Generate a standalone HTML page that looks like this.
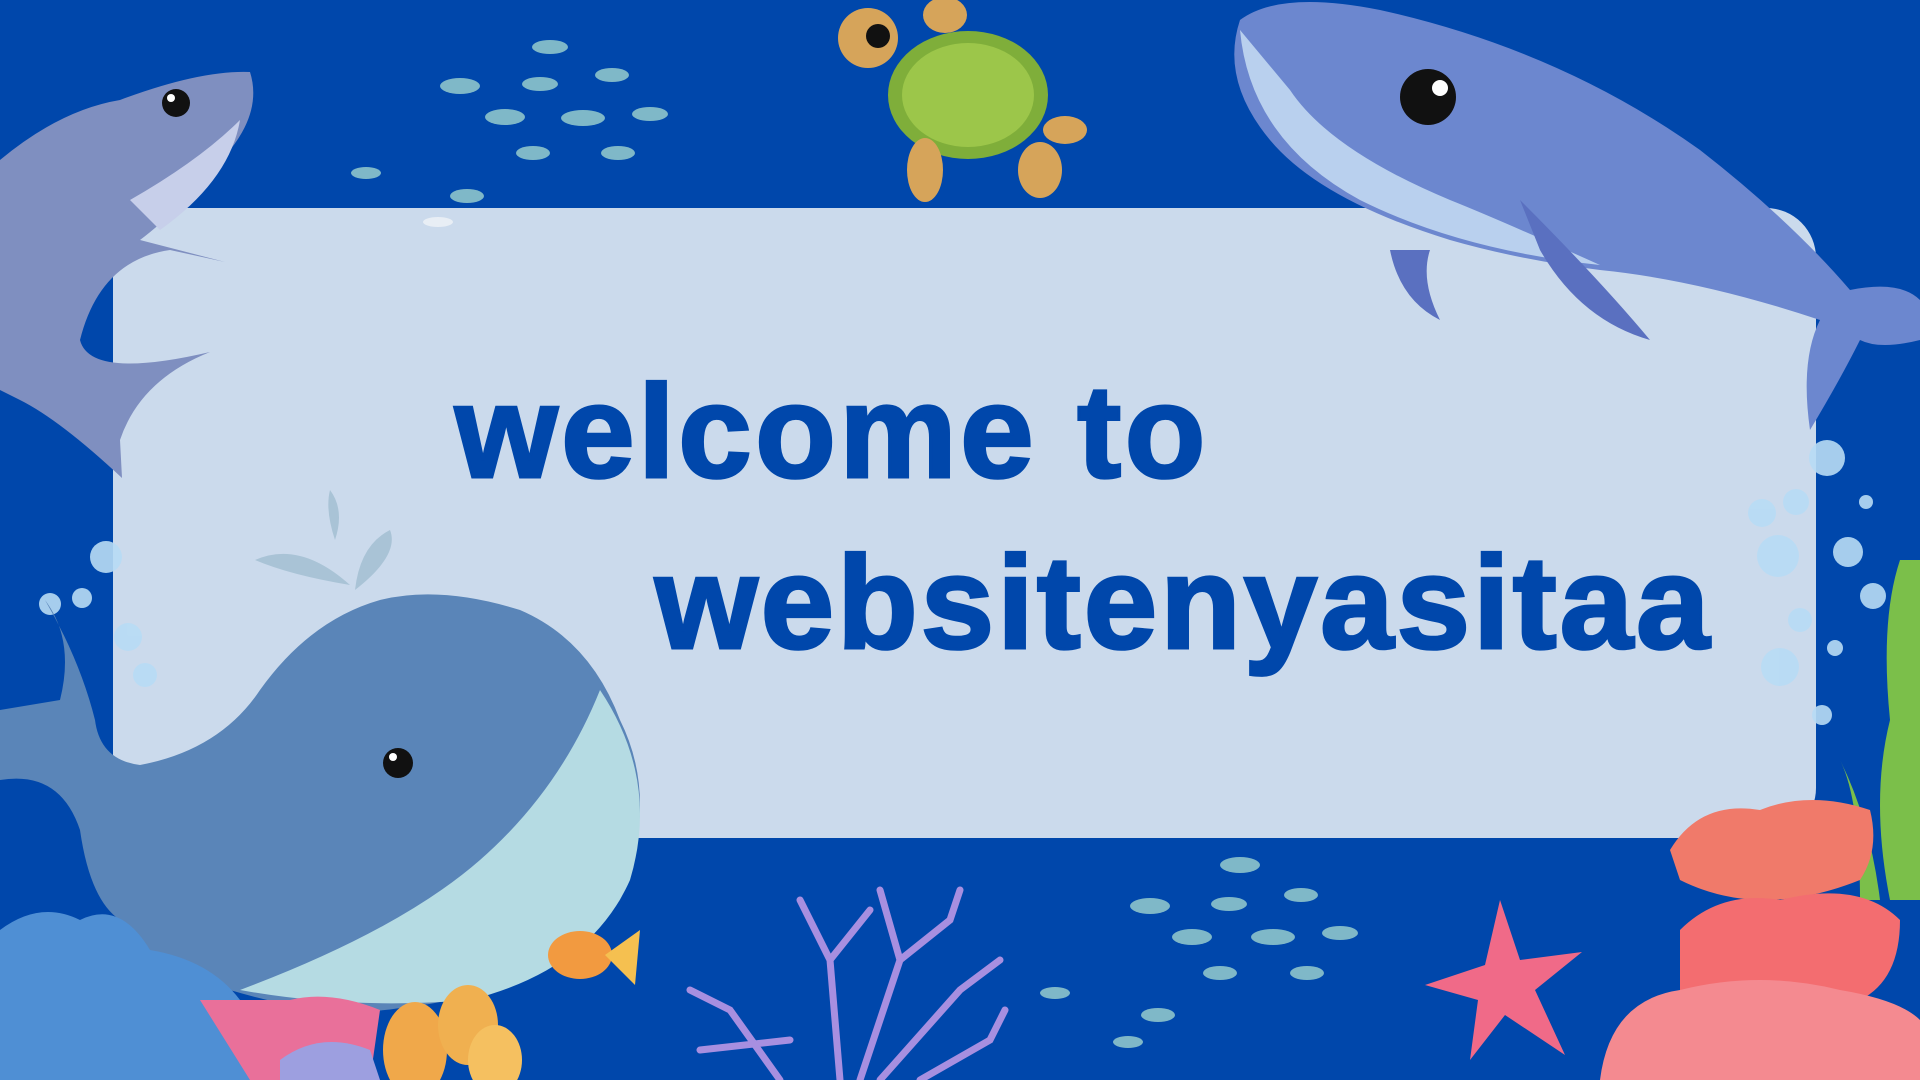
<!DOCTYPE html>
<html><head><meta charset="utf-8"><style>
html,body{margin:0;padding:0;width:1920px;height:1080px;overflow:hidden;background:#0047AB}
.panel{position:absolute;left:113px;top:208px;width:1703px;height:630px;background:#CBDAEC;border-radius:50px}
.t{position:absolute;font-family:"Liberation Sans",sans-serif;font-weight:bold;color:#0047AB;font-size:132px;line-height:1;white-space:nowrap;-webkit-text-stroke:3px #0047AB}
svg{position:absolute;left:0;top:0}
</style></head><body>
<div class="panel"></div>
<div class="t" style="left:455px;top:366px;letter-spacing:3.5px">welcome to</div>
<div class="t" style="left:655px;top:537px;letter-spacing:3px">websitenyasitaa</div>
<svg width="1920" height="1080" viewBox="0 0 1920 1080">
<g fill="#7fb8c8">
<ellipse cx="550" cy="47" rx="18" ry="7"/><ellipse cx="460" cy="86" rx="20" ry="8"/><ellipse cx="540" cy="84" rx="18" ry="7"/><ellipse cx="612" cy="75" rx="17" ry="7"/>
<ellipse cx="505" cy="117" rx="20" ry="8"/><ellipse cx="583" cy="118" rx="22" ry="8"/><ellipse cx="650" cy="114" rx="18" ry="7"/><ellipse cx="533" cy="153" rx="17" ry="7"/><ellipse cx="618" cy="153" rx="17" ry="7"/>
<ellipse cx="366" cy="173" rx="15" ry="6"/><ellipse cx="467" cy="196" rx="17" ry="7"/><ellipse cx="438" cy="222" rx="15" ry="5" fill="#e8eef5"/>
<ellipse cx="1240" cy="865" rx="20" ry="8"/><ellipse cx="1150" cy="906" rx="20" ry="8"/><ellipse cx="1229" cy="904" rx="18" ry="7"/><ellipse cx="1301" cy="895" rx="17" ry="7"/>
<ellipse cx="1192" cy="937" rx="20" ry="8"/><ellipse cx="1273" cy="937" rx="22" ry="8"/><ellipse cx="1340" cy="933" rx="18" ry="7"/><ellipse cx="1220" cy="973" rx="17" ry="7"/><ellipse cx="1307" cy="973" rx="17" ry="7"/>
<ellipse cx="1055" cy="993" rx="15" ry="6"/><ellipse cx="1158" cy="1015" rx="17" ry="7"/><ellipse cx="1128" cy="1042" rx="15" ry="6"/>
</g>
<path d="M0 160 Q60 110 120 100 Q200 70 250 72 Q262 110 230 150 Q180 210 140 240 L225 262 L170 250 Q100 260 80 340 Q90 380 210 352 Q140 380 120 440 L122 478 Q60 420 20 400 L0 390 Z" fill="#7f8fc0"/>
<path d="M130 200 Q200 160 240 120 Q230 180 160 230 Z" fill="#c7cfea"/>
<circle cx="176" cy="103" r="14" fill="#111"/><circle cx="171" cy="98" r="4" fill="#fff"/>
<ellipse cx="968" cy="95" rx="80" ry="64" fill="#7fae3a"/>
<ellipse cx="968" cy="95" rx="66" ry="52" fill="#9cc64a"/>
<circle cx="868" cy="38" r="30" fill="#d6a45a"/><circle cx="878" cy="36" r="12" fill="#111"/>
<ellipse cx="925" cy="170" rx="18" ry="32" fill="#d6a45a"/><ellipse cx="1040" cy="170" rx="22" ry="28" fill="#d6a45a"/><ellipse cx="1065" cy="130" rx="22" ry="14" fill="#d6a45a"/><ellipse cx="945" cy="15" rx="22" ry="18" fill="#d6a45a"/>
<path d="M1240 20 Q1280 -10 1380 10 Q1560 50 1700 150 Q1790 220 1850 290 Q1900 280 1920 300 L1920 340 Q1880 350 1860 340 Q1840 380 1810 430 Q1800 360 1820 320 Q1700 280 1600 270 Q1520 260 1450 240 Q1320 200 1270 140 Q1220 80 1240 20 Z" fill="#6c87cf"/>
<path d="M1240 30 Q1250 140 1360 200 Q1460 250 1600 265 Q1500 220 1450 200 Q1330 150 1290 90 Z" fill="#b9d0ee"/>
<path d="M1520 200 Q1600 280 1650 340 Q1580 320 1540 250 Z" fill="#5a70c0"/>
<path d="M1390 250 Q1400 300 1440 320 Q1420 280 1430 250 Z" fill="#5a70c0"/>
<circle cx="1428" cy="97" r="28" fill="#111"/><circle cx="1440" cy="88" r="8" fill="#fff"/>
<g fill="#b8dcf5" opacity=".9">
<circle cx="1827" cy="458" r="18"/><circle cx="1762" cy="513" r="14"/><circle cx="1796" cy="502" r="13"/><circle cx="1778" cy="556" r="21"/><circle cx="1848" cy="552" r="15"/><circle cx="1873" cy="596" r="13"/><circle cx="1800" cy="620" r="12"/><circle cx="1780" cy="667" r="19"/><circle cx="1835" cy="648" r="8"/><circle cx="1822" cy="715" r="10"/><circle cx="1866" cy="502" r="7"/>
<circle cx="106" cy="557" r="16"/><circle cx="82" cy="598" r="10"/><circle cx="50" cy="604" r="11"/><circle cx="128" cy="637" r="14"/><circle cx="145" cy="675" r="12"/><circle cx="102" cy="772" r="9"/>
</g>
<path d="M255 560 Q300 540 350 585 Q290 575 255 560 Z M330 490 Q345 510 335 540 Q325 510 330 490 Z M390 530 Q400 555 355 590 Q360 545 390 530 Z" fill="#a9c3d6"/>
<path d="M45 600 Q75 640 60 700 L0 710 L0 780 Q60 770 80 830 Q90 900 120 920 Q140 960 140 1000 Q200 985 230 990 Q330 1020 400 1008 Q560 990 620 900 Q660 800 620 720 Q590 640 520 610 Q440 585 380 600 Q310 620 260 690 Q220 750 140 765 Q100 760 95 720 Q80 660 45 600 Z" fill="#5a85b8"/>
<path d="M600 690 Q660 780 630 880 Q590 970 470 1000 Q350 1010 240 990 Q400 930 480 860 Q560 790 600 690 Z" fill="#b5dbe3"/>
<circle cx="398" cy="763" r="15" fill="#111"/><circle cx="393" cy="757" r="4" fill="#fff"/>
<path d="M0 930 Q40 900 80 920 Q120 900 150 950 Q210 960 240 1000 Q270 1040 260 1080 L0 1080 Z" fill="#4f8fd4"/>
<path d="M200 1000 L250 1080 L370 1080 L380 1010 Q330 990 290 1000 Z" fill="#e9709a"/>
<path d="M280 1060 Q320 1030 370 1050 L380 1080 L280 1080 Z" fill="#9d9fe0"/>
<ellipse cx="415" cy="1050" rx="32" ry="48" fill="#f0a84a"/><ellipse cx="468" cy="1025" rx="30" ry="40" fill="#f0b050"/><ellipse cx="495" cy="1060" rx="27" ry="35" fill="#f5c060"/>
<ellipse cx="580" cy="955" rx="32" ry="24" fill="#f29a40"/><path d="M605 955 L640 930 L635 985 Z" fill="#f5c050"/>
<g stroke="#a78fe0" stroke-width="7" fill="none" stroke-linecap="round">
<path d="M840 1080 L830 960 L800 900 M830 960 L870 910 M860 1080 L900 960 L880 890 M900 960 L950 920 L960 890 M880 1080 L960 990 L1000 960 M780 1080 L730 1010 L690 990 M790 1040 L700 1050 M920 1080 L990 1040 L1005 1010"/>
</g>
<path d="M1500 900 L1520 960 L1582 952 L1535 990 L1565 1055 L1505 1015 L1470 1060 L1478 1000 L1425 985 L1485 965 Z" fill="#f06a88"/>
<path d="M1900 560 Q1880 620 1890 720 Q1870 800 1890 900 L1920 900 L1920 560 Z" fill="#7bbf4a"/>
<path d="M1840 760 Q1860 800 1860 900 L1880 900 Q1870 820 1840 760 Z" fill="#7bbf4a"/>
<path d="M1670 850 Q1700 800 1760 810 Q1810 790 1870 810 Q1880 850 1860 880 Q1760 920 1680 880 Z" fill="#f07a6a"/>
<path d="M1680 930 Q1720 890 1780 900 Q1860 880 1900 920 Q1900 980 1860 1000 Q1760 1020 1680 990 Z" fill="#f36d70"/>
<path d="M1600 1080 Q1610 1000 1680 990 Q1760 970 1840 990 Q1900 1000 1920 1020 L1920 1080 Z" fill="#f48a90"/>
</svg>
</body></html>
